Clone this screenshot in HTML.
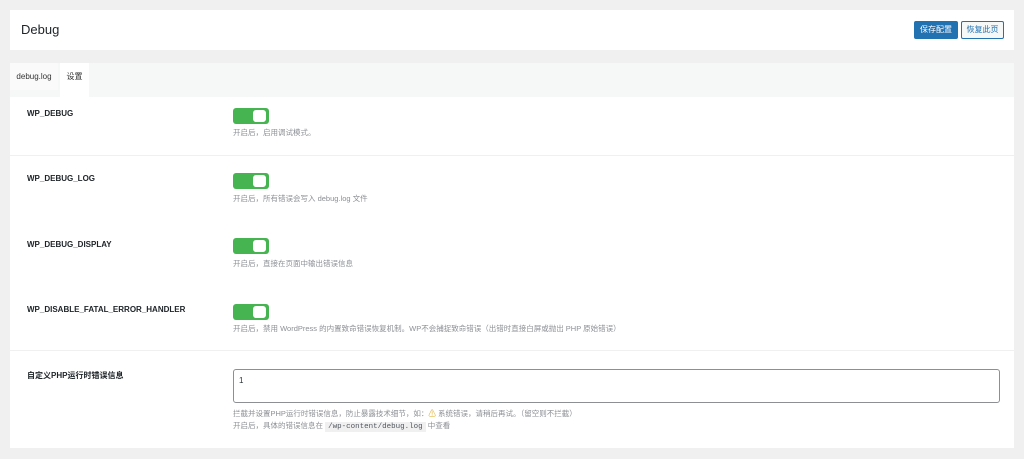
<!DOCTYPE html>
<html><head><meta charset="utf-8"><style>
*{margin:0;padding:0;box-sizing:border-box}
body{width:1024px;height:459px;background:#f0f0f1;font-family:"Liberation Sans","Noto Sans CJK SC",sans-serif;position:relative;overflow:hidden;color:#1d2327}
.a{position:absolute}
.card{background:#fff}
.lbl{font-size:8px;font-weight:bold;color:#1d2327;left:27px}
.tg{left:233px;width:36px;height:16px;background:#46b450;border-radius:3px}
.tg:after{content:"";position:absolute;right:3px;top:2px;width:13px;height:12px;background:#fff;border-radius:3px}
.d{left:233px;font-size:7.5px;color:#8c8f94;white-space:nowrap}
.sep{left:10px;width:1004px;height:1px;background:#f0f0f1}
</style></head><body>
<div class="a card" style="left:10px;top:10px;width:1004px;height:40px"></div>
<div class="a" style="left:21px;top:22px;font-size:13px;color:#1d2327">Debug</div>
<div class="a" style="left:914px;top:21px;width:44px;height:18px;background:#2271b1;border-radius:2px;color:#fff;font-size:8px;text-align:center;line-height:18px">保存配置</div>
<div class="a" style="left:961px;top:21px;width:43px;height:18px;background:#f6f7f7;border:1px solid #2271b1;border-radius:2px;color:#2271b1;font-size:8px;text-align:center;line-height:16px">恢复此页</div>
<div class="a" style="left:10px;top:63px;width:1004px;height:34px;background:#f6f7f7"></div>
<div class="a" style="left:10px;top:63px;width:48px;height:27px;background:#fafafa;font-size:8px;line-height:27px;text-align:center;color:#333">debug.log</div>
<div class="a" style="left:60px;top:63px;width:29px;height:34px;background:#fff;font-size:8px;line-height:27px;text-align:center;color:#333">设置</div>
<div class="a card" style="left:10px;top:90px;width:1004px;height:358px;top:97px;height:351px"></div>
<div class="a sep" style="top:155px"></div>
<div class="a sep" style="top:350px"></div>
<div class="a lbl" style="top:109px">WP_DEBUG</div>
<div class="a tg" style="top:108px"></div>
<div class="a d" style="top:127px">开启后，启用调试模式。</div>
<div class="a lbl" style="top:174px">WP_DEBUG_LOG</div>
<div class="a tg" style="top:173px"></div>
<div class="a d" style="top:193px">开启后，所有错误会写入 debug.log 文件</div>
<div class="a lbl" style="top:240px">WP_DEBUG_DISPLAY</div>
<div class="a tg" style="top:238px"></div>
<div class="a d" style="top:258px">开启后，直接在页面中输出错误信息</div>
<div class="a lbl" style="top:305px">WP_DISABLE_FATAL_ERROR_HANDLER</div>
<div class="a tg" style="top:304px"></div>
<div class="a d" style="top:323px">开启后，禁用 WordPress 的内置致命错误恢复机制。WP不会捕捉致命错误（出错时直接白屏或抛出 PHP 原始错误）</div>
<div class="a lbl" style="top:370px">自定义PHP运行时错误信息</div>
<div class="a" style="left:233px;top:369px;width:767px;height:34px;border:1px solid #8c8f94;border-radius:3px;background:#fff;font-size:8px;padding:6px 5px;color:#2c3338">1</div>
<div class="a d" style="top:408px">拦截并设置PHP运行时错误信息，防止暴露技术细节，如：<span style="color:#dba617">⚠</span> 系统错误，请稍后再试。（留空则不拦截）</div>
<div class="a d" style="top:420px">开启后，具体的错误信息在 <span style="font-family:'Liberation Mono',monospace;background:#f0f0f1;padding:1px 3px;color:#50575e">/wp-content/debug.log</span> 中查看</div>
</body></html>
